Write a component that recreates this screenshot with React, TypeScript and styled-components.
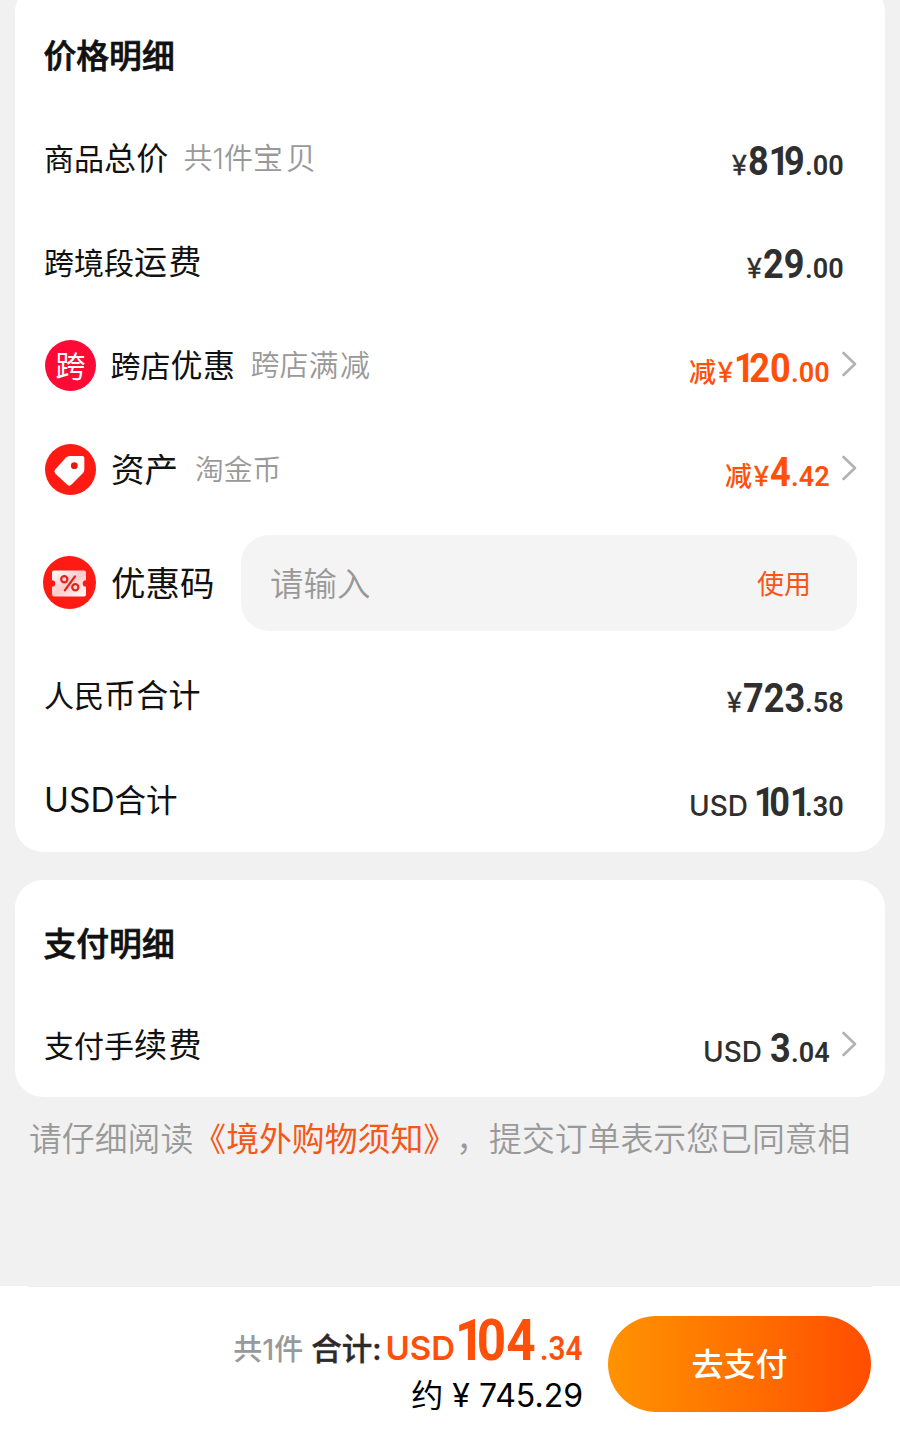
import React from 'react';
import styled, { createGlobalStyle } from 'styled-components';

const GlobalStyle = createGlobalStyle`
  * { box-sizing: border-box; }
  body {
    margin: 0;
    background: #f1f1f1;
    font-family: Inter, "Noto Sans CJK SC", sans-serif;
    color: #111;
  }
`;

const Page = styled.div`
  width: 900px;
  height: 1450px;
  overflow: hidden;
  display: flex;
  flex-direction: column;
`;

const Card = styled.section<{ $first?: boolean }>`
  margin: ${(p) => (p.$first ? '-16px 15px 28px' : '0 15px')};
  padding: ${(p) => (p.$first ? '20px' : '12px')} 29px 0;
  height: ${(p) => (p.$first ? 868 : 217)}px;
  flex: none;
  background: #fff;
  border-radius: 28px;
`;

const Title = styled.h2`
  margin: 0 0 0 -0.5px;
  height: 103px;
  line-height: 105px;
  font-size: 32.8px;
  font-weight: 500;
  -webkit-text-stroke: 0.7px currentColor;
`;

const Row = styled.div<{ $height?: number }>`
  display: flex;
  align-items: center;
  height: ${(p) => p.$height ?? 103.6}px;
`;

const Label = styled.span<{ $size?: number; $gap?: number; $drop?: number }>`
  font-size: ${(p) => p.$size ?? 30}px;
  margin-left: ${(p) => p.$gap ?? 0}px;
  padding-top: ${(p) => p.$drop ?? 0}px;
  line-height: 50px;
  white-space: nowrap;
`;

const Wide = styled.span<{ $size?: number; $spacing?: number }>`
  font-size: ${(p) => p.$size ?? 32}px;
  letter-spacing: ${(p) => p.$spacing ?? 0}px;
`;

const Hint = styled(Label)`
  color: #999;
  font-weight: 350;
`;

const Amount = styled.span<{ $accent?: boolean; $inset?: number }>`
  display: flex;
  align-items: baseline;
  margin-left: auto;
  margin-right: ${(p) => p.$inset ?? 12}px;
  padding-top: 9px;
  line-height: 50px;
  white-space: pre;
  color: ${(p) => (p.$accent ? '#ff500a' : '#2f2f2f')};
`;

const Currency = styled.span<{ $size?: number; $weight?: number; $gap?: number }>`
  font-size: ${(p) => p.$size ?? 28}px;
  font-weight: ${(p) => p.$weight ?? 500};
  margin-right: ${(p) => p.$gap ?? 0}px;
`;

const Yen = styled.span`
  font: 400 28px/50px Roboto, sans-serif;
  -webkit-text-stroke: 0.3px currentColor;
  width: 16px;
`;

const Minus = styled.span`
  font-size: 27px;
  font-weight: 500;
  margin-right: 2px;
`;

const Digits = styled.span<{ $size: number; $width: number; $stretch: number; $weight?: number }>`
  display: inline-block;
  width: ${(p) => p.$width}px;
  font-family: Roboto, sans-serif;
  font-size: ${(p) => p.$size}px;
  font-weight: ${(p) => p.$weight ?? 700};
  transform: scaleX(${(p) => p.$stretch});
  transform-origin: 0 50%;
`;

const One = styled.span<{ $trim?: number }>`
  letter-spacing: -${(p) => p.$trim ?? 0.15}em;
`;

const Badge = styled.span`
  display: flex;
  align-items: center;
  justify-content: center;
  width: 51px;
  height: 51px;
  margin: 0 15px 0 1px;
  border-radius: 50%;
  background: #ff0a36;
  color: #fff;
  font-size: 30px;
  line-height: 1;
`;

const IconSlot = styled.span<{ $shift?: number }>`
  display: flex;
  width: 53px;
  margin-left: ${(p) => p.$shift ?? 0}px;
  margin-right: 14px;
`;

const CodeField = styled.div`
  display: flex;
  align-items: center;
  justify-content: space-between;
  width: 616px;
  height: 96px;
  margin-left: auto;
  margin-right: -1px;
  padding: 0 46px 0 29px;
  border-radius: 28px;
  background: #f4f4f4;
`;

const Action = styled.span`
  color: #f4571a;
  font-size: 27px;
  padding-bottom: 1px;
`;

const Notice = styled.p`
  margin: 0;
  padding: 17px 0 0 29px;
  color: #999;
  font-size: 32.87px;
  line-height: 50px;
  font-weight: 350;
  white-space: nowrap;
  text-spacing-trim: space-all;
  a { color: #f4571a; font-weight: 400; }
`;

const Footer = styled.footer`
  display: flex;
  justify-content: flex-end;
  align-items: flex-start;
  height: 164px;
  margin-top: auto;
  padding: 0 29px;
  background: #fff;
  position: relative;
  &::before {
    content: '';
    position: absolute;
    left: 28px;
    right: 28px;
    top: 0;
    height: 1px;
    background: #eee;
  }
`;

const Totals = styled.div`
  display: flex;
  flex-direction: column;
  align-items: flex-end;
  padding-top: 25px;
  margin-right: 25px;
`;

const TotalLine = styled.div`
  display: flex;
  align-items: baseline;
  height: 60px;
  line-height: 60px;
  color: #ff500a;
`;

const Count = styled.span`
  color: #999;
  font-size: 29px;
  font-weight: 500;
  margin-right: 8px;
`;

const TotalLabel = styled.span`
  color: #2b2b2b;
  font-size: 30.5px;
  font-weight: 500;
  -webkit-text-stroke: 0.4px currentColor;
  margin-right: 4px;
`;

const Approx = styled.div`
  height: 50px;
  line-height: 50px;
  font-size: 32px;
  color: #000;
  white-space: nowrap;
`;

const PayButton = styled.button`
  width: 263px;
  height: 96px;
  margin-top: 30px;
  padding: 2px 0 0;
  border: 0;
  border-radius: 48px;
  background: linear-gradient(90deg, #ff9300 0%, #ff7300 48%, #ff4d00 100%);
  color: #fff;
  font: 500 32px/94px Inter, "Noto Sans CJK SC", sans-serif;
`;

const ChevronBox = styled.svg`
  flex: none;
  margin: 0 -1px 3px 12px;
`;

const Chevron = () => (
  <ChevronBox width="16" height="26" viewBox="0 0 16 26" fill="none" stroke="#b2b2b2" strokeWidth="2.6" strokeLinecap="round" strokeLinejoin="round">
    <path d="M2.5 2 L14 13 L2.5 24" />
  </ChevronBox>
);

const TagIcon = () => (
  <svg width="53" height="53" viewBox="0 0 53 53">
    <circle cx="26.5" cy="26.5" r="25.5" fill="#ff1a14" />
    <path
      d="M22 14.500 Q23.500 13 25.500 13 H38.300 Q40.300 13 40.300 15 V26.500 Q40.300 28.500 39 30 L27.300 41.800 Q25.300 43.500 23.300 41.700 L11.200 30.500 Q9.500 28.600 11.200 26.600 Z"
      fill="#fff"
    />
    <circle cx="30.3" cy="22.700" r="3.4" fill="#e8180f" />
  </svg>
);

const CouponIcon = () => (
  <svg width="53" height="53" viewBox="0 0 53 53">
    <defs>
      <linearGradient id="ticket" x1="0" y1="0" x2="1" y2="1">
        <stop offset="0" stopColor="#fff" />
        <stop offset="0.5" stopColor="#ffc9c9" />
        <stop offset="1" stopColor="#fff" />
      </linearGradient>
    </defs>
    <circle cx="26.5" cy="26.5" r="26.5" fill="#ff1a14" />
    <path
      d="M11 14.500 H41 Q43 14.500 43 16.500 V24.200 A3.300 3.300 0 0 0 43 30.800 V38.500 Q43 40.500 41 40.500 H11 Q9 40.500 9 38.500 V30.800 A3.300 3.300 0 0 0 9 24.200 V16.500 Q9 14.500 11 14.500 Z"
      fill="url(#ticket)"
    />
    <g fill="none" stroke="#e0241c" strokeWidth="2.2" strokeLinecap="round">
      <circle cx="21.3" cy="23.3" r="3.1" />
      <circle cx="32.3" cy="31.3" r="3.1" />
      <path d="M32 20.300 L21.800 34.300" />
    </g>
  </svg>
);

const Cents = ({ children }: { children: string }) => (
  <Digits $size={28.5} $width={39} $stretch={0.95} $weight={600}>{children}</Digits>
);

const Whole = ({ width, children }: { width: number; children: React.ReactNode }) => (
  <Digits $size={41} $width={width} $stretch={0.88}>{children}</Digits>
);

export default function App() {
  return (
    <Page>
      <GlobalStyle />
      <Card $first>
        <Title>价格明细</Title>
        <Row>
          <Label>商品<Wide $spacing={0.3}>总价</Wide></Label>
          <Hint $size={29} $gap={15}>共1件<Wide $size={30} $spacing={3}>宝贝</Wide></Hint>
          <Amount><Yen>¥</Yen><Whole width={57}>8<One>1</One>9</Whole><Cents>.00</Cents></Amount>
        </Row>
        <Row>
          <Label>跨境段<Wide $size={33} $spacing={1.5}>运费</Wide></Label>
          <Amount><Yen>¥</Yen><Whole width={42}>29</Whole><Cents>.00</Cents></Amount>
        </Row>
        <Row>
          <Badge>跨</Badge>
          <Label $gap={-0.5}>跨店<Wide $spacing={0.5}>优惠</Wide></Label>
          <Hint $size={29} $gap={15}>跨店<Wide $size={30} $spacing={1.5}>满减</Wide></Hint>
          <Amount $accent $inset={-1}><Minus>减</Minus><Yen>¥</Yen><Whole width={57}><One>1</One>20</Whole><Cents>.00</Cents></Amount>
          <Chevron />
        </Row>
        <Row>
          <IconSlot><TagIcon /></IconSlot>
          <Label $size={33.5}>资产</Label>
          <Hint $size={28.8} $gap={17}>淘金币</Hint>
          <Amount $accent $inset={-1}><Minus>减</Minus><Yen>¥</Yen><Whole width={21}>4</Whole><Cents>.42</Cents></Amount>
          <Chevron />
        </Row>
        <Row $height={123}>
          <IconSlot $shift={-1}><CouponIcon /></IconSlot>
          <Label $size={34.5} $gap={1} $drop={3}>优惠码</Label>
          <CodeField>
            <Hint $size={33.5} $drop={2}>请输入</Hint>
            <Action>使用</Action>
          </CodeField>
        </Row>
        <Row>
          <Label>人民<Wide $spacing={0.3}>币合计</Wide></Label>
          <Amount><Yen>¥</Yen><Whole width={62}>723</Whole><Cents>.58</Cents></Amount>
        </Row>
        <Row>
          <Label $drop={1}><Wide $size={33.5}>USD</Wide><Wide $size={31.5}>合计</Wide></Label>
          <Amount><Currency $gap={6}>USD</Currency><Whole width={51}><One>1</One>0<One $trim={0.2}>1</One></Whole><Cents>.30</Cents></Amount>
        </Row>
      </Card>
      <Card>
        <Title>支付明细</Title>
        <Row $height={101}>
          <Label>支付手<Wide $size={33} $spacing={1.5}>续费</Wide></Label>
          <Amount $inset={-1}><Currency $gap={8}>USD</Currency><Whole width={21}>3</Whole><Cents>.04</Cents></Amount>
          <Chevron />
        </Row>
      </Card>
      <Notice>请仔细阅读<a>《境外购物须知》</a>，提交订单表示您已同意相</Notice>
      <Footer>
        <Totals>
          <TotalLine>
            <Count>共1件</Count>
            <TotalLabel>合计:</TotalLabel>
            <Currency $size={33} $weight={600}>USD</Currency>
            <Digits $size={57} $width={85} $stretch={0.9}><One>1</One>04</Digits>
            <Digits $size={33} $width={43} $stretch={0.9} $weight={600}>.34</Digits>
          </TotalLine>
          <Approx>约 ¥ 745.29</Approx>
        </Totals>
        <PayButton>去支付</PayButton>
      </Footer>
    </Page>
  );
}
